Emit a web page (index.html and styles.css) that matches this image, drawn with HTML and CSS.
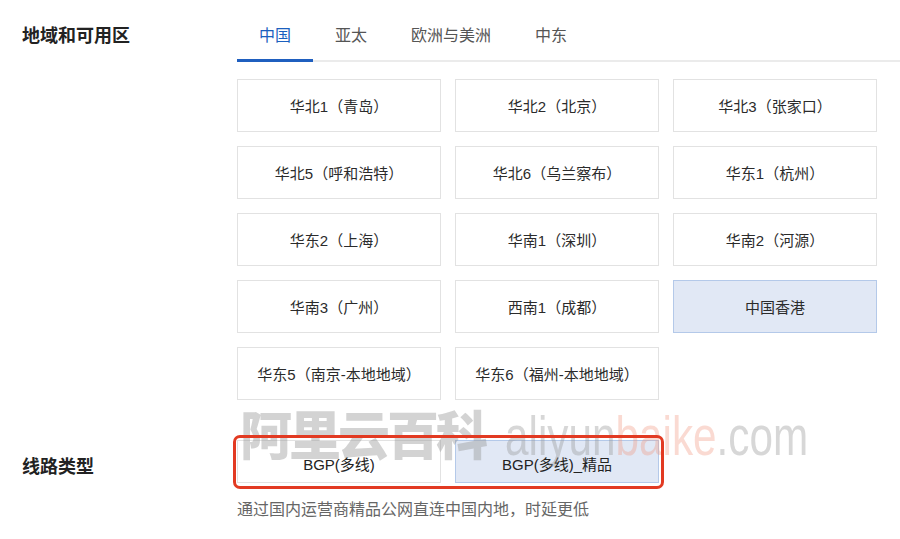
FILE: index.html
```html
<!DOCTYPE html>
<html lang="zh-CN">
<head>
<meta charset="utf-8">
<title>地域和可用区</title>
<link rel="stylesheet" href="styles.css">
</head>
<body>
<div class="page">
  <section class="form-row region-row">
    <div class="label label-top">地域和可用区</div>
    <div class="field">
      <div class="tabs">
        <div class="tab active">中国</div>
        <div class="tab">亚太</div>
        <div class="tab">欧洲与美洲</div>
        <div class="tab">中东</div>
      </div>
      <div class="region-grid">
        <div class="opt">华北1（青岛）</div>
        <div class="opt">华北2（北京）</div>
        <div class="opt">华北3（张家口）</div>
        <div class="opt">华北5（呼和浩特）</div>
        <div class="opt">华北6（乌兰察布）</div>
        <div class="opt">华东1（杭州）</div>
        <div class="opt">华东2（上海）</div>
        <div class="opt">华南1（深圳）</div>
        <div class="opt">华南2（河源）</div>
        <div class="opt">华南3（广州）</div>
        <div class="opt">西南1（成都）</div>
        <div class="opt selected">中国香港</div>
        <div class="opt">华东5（南京-本地地域）</div>
        <div class="opt">华东6（福州-本地地域）</div>
      </div>
    </div>
  </section>
  <section class="form-row line-row">
    <div class="label label-line">线路类型</div>
    <div class="field">
      <div class="line-group">
        <div class="line-opt">BGP(多线)</div>
        <div class="line-opt selected">BGP(多线)_精品</div>
        <div class="highlight"></div>
      </div>
      <p class="desc">通过国内运营商精品公网直连中国内地，时延更低</p>
    </div>
  </section>
  <div class="watermark">
    <span class="wm-cn">阿里云百科</span>
    <span class="wm-en">aliyun<span class="wm-accent">baike</span>.com</span>
  </div>
</div>
</body>
</html>
```
FILE: styles.css
```css
* { box-sizing: border-box; }
html, body { margin: 0; padding: 0; background: #fff; }
body {
  font-family: "Liberation Sans", "Noto Sans CJK SC", sans-serif;
  color: #333;
  width: 900px;
  height: 539px;
  overflow: hidden;
}
.page {
  position: relative;
  padding-left: 22px;
}
.form-row {
  display: grid;
  grid-template-columns: 215px 1fr;
}
.label {
  font-size: 18px;
  font-weight: bold;
  color: #222;
  line-height: 24px;
}
.label-top { padding-top: 24px; }
.label-line { padding-top: 15px; }

.tabs {
  display: flex;
  border-bottom: 2px solid #ebebeb;
  height: 62px;
}
.tab {
  font-size: 16px;
  line-height: 24px;
  padding: 24px 22px 11px;
  margin-bottom: -2px;
  border-bottom: 3px solid transparent;
  color: #555;
}
.tab.active {
  color: #1b5fbe;
  border-bottom-color: #1f5fbf;
}

.region-grid {
  margin-top: 17px;
  width: 640px;
  display: grid;
  grid-template-columns: repeat(3, 204px);
  grid-auto-rows: 53px;
  column-gap: 14px;
  row-gap: 14px;
}
.opt {
  border: 1px solid #e2e2e2;
  display: flex;
  align-items: center;
  justify-content: center;
  font-size: 15px;
  color: #2b2b2b;
  background: #fff;
  white-space: nowrap;
}
.opt.selected,
.line-opt.selected {
  background: #e1e8f5;
  border-color: #b4c9e9;
}

.line-row { margin-top: 40px; }
.line-group {
  position: relative;
  display: grid;
  grid-template-columns: repeat(2, 204px);
  column-gap: 14px;
  width: 422px;
}
.line-opt {
  border: 1px solid #e2e2e2;
  height: 43px;
  padding-top: 13px;
  line-height: 22px;
  text-align: center;
  font-size: 15px;
  color: #222;
  background: #fff;
}
.highlight {
  position: absolute;
  left: -4px;
  right: -5px;
  top: -5px;
  bottom: -6px;
  border: 3px solid #e23a22;
  border-radius: 7px;
  z-index: 3;
}
.desc {
  margin: 16px 0 0;
  font-size: 16px;
  line-height: 22px;
  color: #666;
}

.watermark {
  position: absolute;
  left: 240px;
  top: 405px;
  z-index: 2;
  pointer-events: none;
  white-space: nowrap;
}
.wm-cn {
  position: absolute;
  left: 0;
  top: 0;
  font-family: "Noto Sans CJK SC", sans-serif;
  font-weight: 900;
  font-size: 52px;
  line-height: 56px;
  letter-spacing: -3px;
  color: rgba(150, 150, 150, 0.42);
}
.wm-en {
  position: absolute;
  left: 265px;
  top: 3px;
  font-family: "Liberation Sans", sans-serif;
  font-size: 56px;
  line-height: 56px;
  color: rgba(150, 150, 150, 0.38);
  transform: scaleX(0.755);
  transform-origin: left top;
}
.wm-accent { color: rgba(240, 150, 125, 0.35); }
```
